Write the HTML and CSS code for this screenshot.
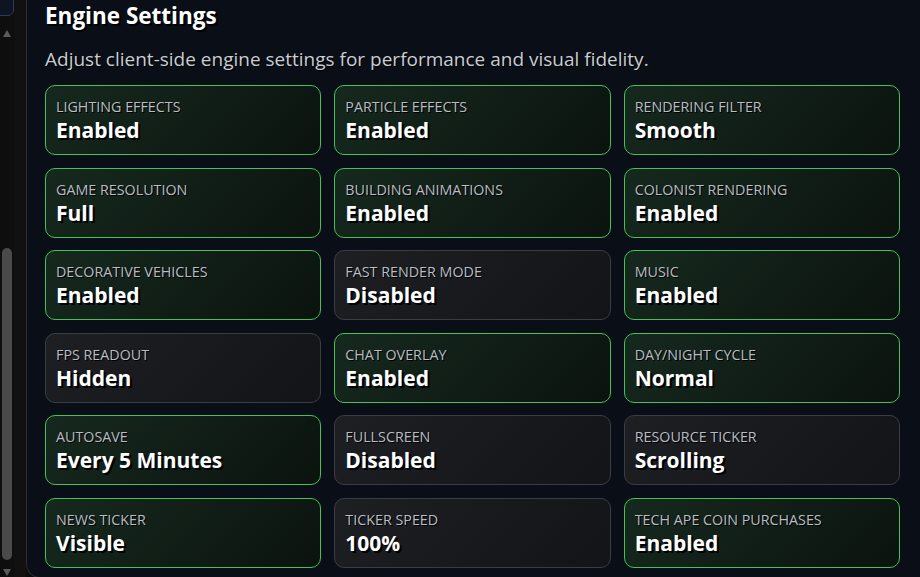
FILE: index.html
```html
<!DOCTYPE html>
<html lang="en">
<head>
  <meta charset="UTF-8">
  <title>Engine Settings</title>
  <meta name="viewport" content="width=device-width, initial-scale=1.0">
  <link rel="stylesheet" href="styles.css">
</head>
<body>

<div class="layout">
  <aside class="sidebar">
    <div class="sidebar-card"></div>
    <div class="scrollbar">
      <span class="arrow up"></span>
      <span class="thumb"></span>
      <span class="arrow down"></span>
    </div>
  </aside>

  <section class="panel">
    <h2>Engine Settings</h2>
    <p class="lead">Adjust client-side engine settings for performance and visual fidelity.</p>

    <div class="grid">
      <div class="setting on"><span class="label">Lighting Effects</span><span class="value">Enabled</span></div>
      <div class="setting on"><span class="label">Particle Effects</span><span class="value">Enabled</span></div>
      <div class="setting on"><span class="label">Rendering Filter</span><span class="value">Smooth</span></div>

      <div class="setting on"><span class="label">Game Resolution</span><span class="value">Full</span></div>
      <div class="setting on"><span class="label">Building Animations</span><span class="value">Enabled</span></div>
      <div class="setting on"><span class="label">Colonist Rendering</span><span class="value">Enabled</span></div>

      <div class="setting on"><span class="label">Decorative Vehicles</span><span class="value">Enabled</span></div>
      <div class="setting"><span class="label">Fast Render Mode</span><span class="value">Disabled</span></div>
      <div class="setting on"><span class="label">Music</span><span class="value">Enabled</span></div>

      <div class="setting"><span class="label">FPS Readout</span><span class="value">Hidden</span></div>
      <div class="setting on"><span class="label">Chat Overlay</span><span class="value">Enabled</span></div>
      <div class="setting on"><span class="label">Day/Night Cycle</span><span class="value">Normal</span></div>

      <div class="setting on"><span class="label">Autosave</span><span class="value">Every 5 Minutes</span></div>
      <div class="setting"><span class="label">Fullscreen</span><span class="value">Disabled</span></div>
      <div class="setting"><span class="label">Resource Ticker</span><span class="value">Scrolling</span></div>

      <div class="setting on"><span class="label">News Ticker</span><span class="value">Visible</span></div>
      <div class="setting"><span class="label">Ticker Speed</span><span class="value">100%</span></div>
      <div class="setting on"><span class="label">Tech Ape Coin Purchases</span><span class="value">Enabled</span></div>
    </div>
  </section>
</div>

</body>
</html>
```

FILE: styles.css
```css
html, body { margin: 0; height: 100%; overflow: hidden; }
body { font-family: "Open Sans", "Noto Sans", sans-serif; background: #0b0b0b; color: #fff; }

.layout { display: flex; height: 577px; }

/* left column: only the scrollbar edge is visible */
.sidebar { width: 26px; flex: none; background: #13110f; position: relative; }
.sidebar-card { position: absolute; left: -10px; top: -10px; width: 22px; height: 24px; background: #0d1524; border: 1px solid #2b3b57; border-radius: 6px; }
.scrollbar { width: 14px; height: 100%; background: #0e0e0e; display: flex; flex-direction: column; align-items: center; }
.arrow { width: 0; height: 0; border-left: 4px solid transparent; border-right: 4px solid transparent; }
.arrow.up { border-bottom: 7px solid #5b5b5b; margin-top: 30px; }
.arrow.down { border-top: 7px solid #5b5b5b; margin-top: 9px; }
.thumb { width: 10px; margin-top: 211px; height: 312px; background: #4a4a4a; border-radius: 5px; }

.panel {
  flex: 1;
  margin-top: -30px;
  height: 608px;
  padding: 31px 20px 0 18px;
  border: 1px solid #2a2d33;
  border-right: none;
  border-radius: 14px 0 0 14px;
  background: #0a0e16;
  box-sizing: border-box;
}

h2 { margin: 0; font-size: 22.5px; font-weight: 700; line-height: 28px; text-shadow: 2px 2px 0 #000; }
.lead { margin: 17px 0 0; font-size: 19px; line-height: 24px; color: #c9cdd2; text-shadow: 1px 1px 0 #000; }

.grid { display: grid; grid-template-columns: repeat(3, 1fr); column-gap: 13px; row-gap: 12.5px; margin-top: 14px; }

.setting {
  height: 70px;
  box-sizing: border-box;
  padding: 12px 10px 0;
  border: 1px solid #3a3d43;
  border-radius: 10px;
  background: linear-gradient(135deg, #1d1f23 0%, #121418 100%);
  display: flex;
  flex-direction: column;
}
.setting.on { border-color: #46c058; background: linear-gradient(135deg, #16291e 0%, #0b130f 100%); }

.label { font-size: 14.3px; line-height: 18px; text-transform: uppercase; color: #b9bdc2; text-shadow: 1px 1px 0 #000; }
.value { font-size: 21px; font-weight: 700; line-height: 28px; color: #fff; text-shadow: 2px 2px 0 #000; }
```
